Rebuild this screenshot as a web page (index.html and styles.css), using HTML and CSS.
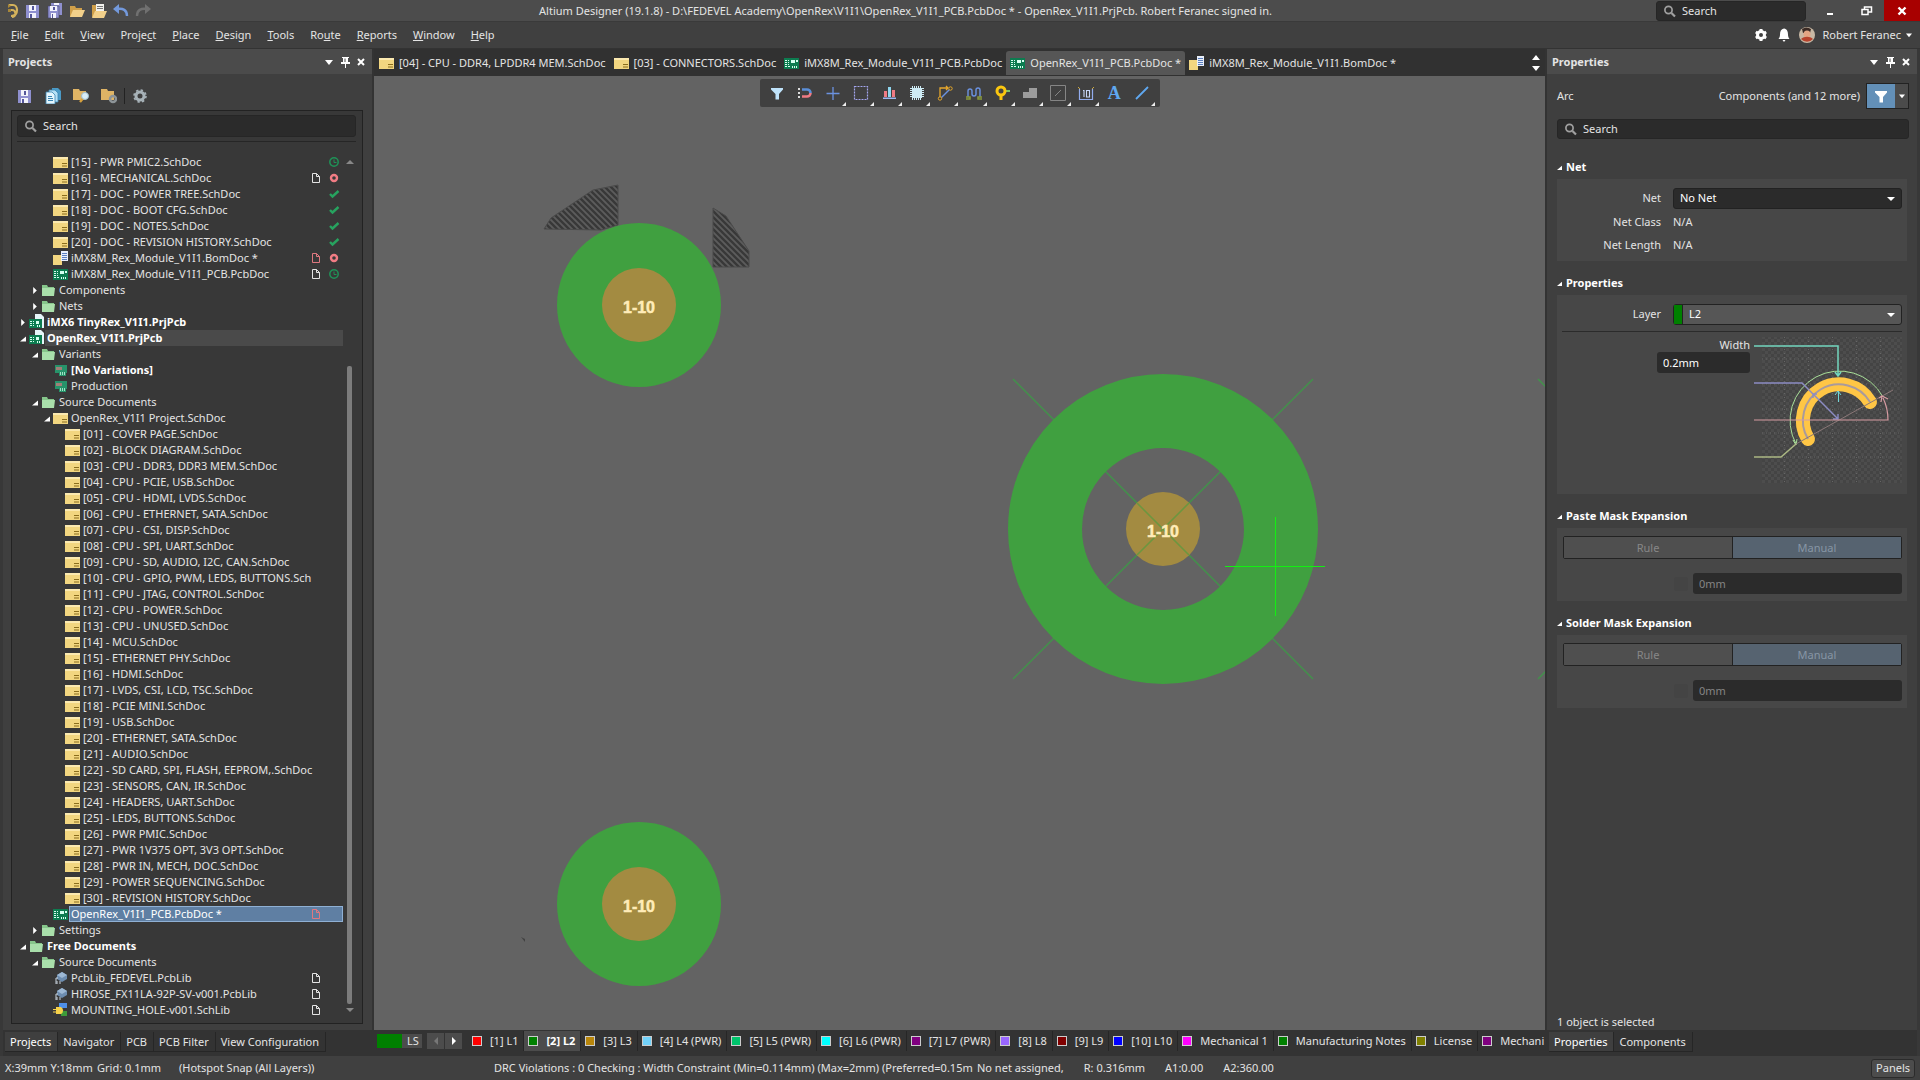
FILE: index.html
```html
<!DOCTYPE html>
<html lang="en">
<head>
    <meta charset="UTF-8">
    <meta name="viewport" content="width=device-width, initial-scale=1.0">
    <title>Altium Designer</title>
    <link rel="stylesheet" href="styles.css">
</head>
<body>

    <!-- Icons -->
    <svg class="sprite" aria-hidden="true">
        <symbol id="sch" viewBox="0 0 16 16"><path fill="#f2d680" d="M0 3h15v11H0z"/><path fill="#fbe9b0" d="M0 3h15v2H0z"/><path fill="none" stroke="#8a6d1c" d="M9 9.5h5M9 12h5"/></symbol>
        <symbol id="bom" viewBox="0 0 16 16"><path fill="#f2d680" d="M0 5h9v10H0z"/><path fill="#e8effb" d="M8 1h7v10H8z"/><path stroke="#5b7fc0" d="M9 3.5h5M9 5.5h5M9 7.5h5M9 9.5h5"/></symbol>
        <symbol id="pcb" viewBox="0 0 16 16"><path fill="#0d7c50" d="M0 3h15v11H0z"/><path fill="#d6fff0" d="M7 5h4v3H7zM12 5h2v2h-2zM8 11h1v2H8zM10 11h1v2h-1zM12 11h1v2h-1z"/><path stroke="#d6fff0" d="M1 5.5h2M4 5.5h1M1 7.5h2M4 7.5h1M1 9.5h2M4 9.5h1M1 11.5h2M4 11.5h2"/></symbol>
        <symbol id="prj" viewBox="0 0 16 16"><path fill="#e6f5f8" d="M6 0h6l3 3v11H6z"/><path fill="#0d7c50" d="M0 5h13v9H0z"/><path fill="#d6fff0" d="M7 7h3v3H7zM8 11h1v2H8zM10 11h1v2h-1z"/><path stroke="#d6fff0" d="M1 7.500h2M4 7.500h1M1 9.500h2M4 9.500h1M1 11.500h2M4 11.500h1"/></symbol>
        <symbol id="folder" viewBox="0 0 16 16"><path fill="#86c68b" d="M1 3h5l1 2h6v9H1z"/><path fill="#a9dfab" d="M1 6h13l-1 8H1z"/></symbol>
        <symbol id="variant" viewBox="0 0 16 16"><path fill="#27936a" d="M2 3h12v8h-1v3H6v-3H2z"/><path fill="#a08078" d="M3 5h6v3H3z"/><path stroke="#9fe3c6" d="M7.500 10v3M9.500 10v3M11.500 10v3"/></symbol>
        <symbol id="pcblib" viewBox="0 0 16 16"><path fill="#6d8db0" d="M4 5l5-3 5 3v4l-5 3-5-3z"/><path fill="#9db8d4" d="M4 5l5-3 5 3-5 3z"/><path fill="none" stroke="#c9d3dd" d="M5 8H3v6M7 11v3M4 11v3"/></symbol>
        <symbol id="schlib" viewBox="0 0 16 16"><path fill="#4e8fe8" d="M6 1h8v5H6z"/><path fill="#3d9a3a" d="M8 9h6v5H8z"/><path fill="#f7d24a" d="M3 5h5a4 4 0 010 7H3z"/><path stroke="#f7d24a" d="M0 7.500h4M0 10h4"/></symbol>
        <symbol id="doc" viewBox="0 0 16 16"><path fill="none" stroke="currentColor" d="M4.500 3.500h4l3 3v6h-7zM8.500 3.500v3h3"/></symbol>
        <symbol id="ok" viewBox="0 0 16 16"><path fill="none" stroke="#27a35f" stroke-width="2.400" d="M4 8l2.500 2.500 6-5.500"/></symbol>
        <symbol id="clock" viewBox="0 0 16 16"><circle cx="8" cy="8" r="4.200" fill="none" stroke="#1f9257" stroke-width="1.500"/><path fill="none" stroke="#1f9257" d="M8 5.500V8.500h2.500"/></symbol>
        <symbol id="stop" viewBox="0 0 16 16"><circle cx="8" cy="8" r="3" fill="none" stroke="#f17c84" stroke-width="2.400"/></symbol>
        <symbol id="save" viewBox="0 0 16 16"><path fill="#8f90cf" d="M1 2h13v13H1z"/><path fill="#f3f3fb" d="M4 2h7v6H4zM4 10h7v5H4z"/><path fill="#55579b" d="M7 3h2v4H7zM5 11h2v4H5z"/></symbol>
        <symbol id="saveall" viewBox="0 0 16 16"><path fill="#8f90cf" d="M4 0h11v12H4z"/><path fill="#f3f3fb" d="M7 0h5v2H7z"/><path fill="#8f90cf" stroke="#44446a" stroke-width=".6" d="M1 3h11v12H1z"/><path fill="#f3f3fb" d="M3 3h7v5H3zM4 10h5v5H4z"/><path fill="#55579b" d="M6 4h2v3H6zM5 11h1v4H5z"/></symbol>
        <symbol id="open" viewBox="0 0 16 16"><path fill="#cf9f4a" d="M1 3h5l1 2h6v9H1z"/><path fill="#f2d08a" d="M4 7h12l-3 7H1z"/></symbol>
        <symbol id="openprj" viewBox="0 0 16 16"><path fill="#cf9f4a" d="M1 2h4l1 3h7v9H1z"/><path fill="#f2f2ee" d="M5 1h8v8H5z"/><path stroke="#777" d="M6 3.500h6M6 5.500h6"/><path fill="#f2d08a" d="M4 8h12l-3 7H1z"/></symbol>
        <symbol id="undo" viewBox="0 0 16 16"><path fill="none" stroke="#7399dc" stroke-width="2.400" d="M4 6c6-1 10 1 10 7"/><path fill="#7399dc" d="M0 6l6-5v10z"/></symbol>
        <symbol id="redo" viewBox="0 0 16 16"><path fill="none" stroke="#707070" stroke-width="2.400" d="M12 6C6 5 2 7 2 13"/><path fill="#707070" d="M16 6l-6-5v10z"/></symbol>
        <symbol id="copy" viewBox="0 0 16 16"><path fill="#4b9ac6" d="M7 0h6l3 3v9H7z"/><path fill="#b5e0f5" stroke="#3a86b3" stroke-width=".8" d="M4 2h6l3 3v9H4z"/><path fill="#e5f6fd" stroke="#3a86b3" stroke-width=".8" d="M1 4h6l3 3v9H1z"/><path stroke="#3a86b3" d="M3 8.500h4M3 10.500h5M3 12.500h5"/></symbol>
        <symbol id="foldfind" viewBox="0 0 16 16"><path fill="#dfb465" d="M0 1h6l1 2h6v9H0z"/><circle cx="12" cy="8" r="3.500" fill="#d8edf7" stroke="#9dbccb"/><path stroke="#d7a13d" stroke-width="2.400" d="M9.500 11L7 14"/></symbol>
        <symbol id="foldgear" viewBox="0 0 16 16"><path fill="#dfb465" d="M0 1h6l1 2h6v9H0z"/><circle cx="12" cy="11" r="3" fill="none" stroke="#8d9498" stroke-width="2.500"/></symbol>
        <symbol id="ring" viewBox="0 0 16 16"><circle cx="8" cy="8" r="4" fill="none" stroke="#a7b2b8" stroke-width="3"/><circle cx="8" cy="8" r="6" fill="none" stroke="#a7b2b8" stroke-width="1.600" stroke-dasharray="2.400 2.300"/></symbol>
        <symbol id="gear" viewBox="0 0 16 16"><circle cx="8" cy="8" r="3.500" fill="none" stroke="#fff" stroke-width="3"/><path stroke="#fff" stroke-width="3" d="M8 2v2M8 12v2M2.800 5l1.700 1M11.500 10l1.700 1M2.800 11l1.700-1M11.500 6l1.700-1"/></symbol>
        <symbol id="bell" viewBox="0 0 16 16"><path fill="#fff" d="M8 1.500c3 .5 4 3 4 6 0 2 .5 3 1.500 4.500h-11C3.500 10.500 4 9.500 4 7.500c0-3 1-5.500 4-6zM6.500 13h3l-1.500 2z"/></symbol>
        <symbol id="find" viewBox="0 0 16 16"><circle cx="6.500" cy="7" r="3.600" fill="none" stroke="#a0a0a0" stroke-width="1.700"/><path stroke="#a0a0a0" stroke-width="2.200" d="M9.500 10l3.500 3.500"/></symbol>
        <symbol id="down" viewBox="0 0 16 16"><path fill="#fff" d="M4 6h8l-4 5z"/></symbol>
        <symbol id="pin" viewBox="0 0 16 16"><path fill="#fff" d="M5 3h7v1h-1v4h2v2H9v4H8v-4H4V8h2V4H5z"/><path fill="#4b4b4b" d="M7.500 4.500h1V8h-1z"/></symbol>
        <symbol id="close" viewBox="0 0 16 16"><path stroke="#fff" stroke-width="2" d="M5 5l6 6M11 5l-6 6"/></symbol>
        <symbol id="filter" viewBox="0 0 16 16"><path fill="currentColor" d="M2 3h12v1.500L10 9v5.500H6.500V9L2 4.500z"/></symbol>
        <symbol id="shut" viewBox="0 0 6 10"><path fill="#fff" d="M1 1l4 4-4 4z"/></symbol>
        <symbol id="opened" viewBox="0 0 6 6"><path fill="#fff" d="M6 1v5H0z"/></symbol>
    </svg>

    <div class="app">

        <!-- Title bar -->
        <header class="titlebar">
            <div class="quick">
                <svg class="ic" viewBox="0 0 16 16"><path fill="none" stroke="#d4b25c" stroke-width="2.200" d="M6 2h4a4 5 0 014 5c0 4-2 6-6 6M6 7h3a2 2 0 010 7"/><path fill="#a8873a" d="M5 1l3 2-3 2zM5 6h3v3H5z"/></svg>
                <svg class="ic"><use href="#save"/></svg>
                <svg class="ic"><use href="#saveall"/></svg>
                <svg class="ic"><use href="#open"/></svg>
                <svg class="ic"><use href="#openprj"/></svg>
                <svg class="ic"><use href="#undo"/></svg>
                <svg class="ic"><use href="#redo"/></svg>
            </div>
            <div class="title">Altium Designer (19.1.8) - D:\FEDEVEL Academy\OpenRex\V1I1\OpenRex_V1I1_PCB.PcbDoc * - OpenRex_V1I1.PrjPcb. Robert Feranec signed in.</div>
            <label class="search title-search"><svg class="ic"><use href="#find"/></svg><input type="text" placeholder="Search" aria-label="Search"></label>
            <div class="winbtns">
                <button type="button" aria-label="Minimize"><svg class="ic" viewBox="0 0 16 16"><path fill="#fff" d="M5 10h6v2H5z"/></svg></button>
                <button type="button" aria-label="Restore"><svg class="ic" viewBox="0 0 16 16"><path fill="none" stroke="#fff" stroke-width="1.500" d="M6.500 6V4h7v5h-3M4 6.500h6v5H4z"/></svg></button>
                <button type="button" class="quit" aria-label="Close"><svg class="ic" viewBox="0 0 16 16"><path stroke="#fff" stroke-width="2.400" d="M4.500 4.500l7 7M11.500 4.500l-7 7"/></svg></button>
            </div>
        </header>

        <!-- Main menu -->
        <nav class="menubar">
            <button type="button"><u>F</u>ile</button>
            <button type="button"><u>E</u>dit</button>
            <button type="button"><u>V</u>iew</button>
            <button type="button">Proje<u>c</u>t</button>
            <button type="button"><u>P</u>lace</button>
            <button type="button"><u>D</u>esign</button>
            <button type="button"><u>T</u>ools</button>
            <button type="button">Ro<u>u</u>te</button>
            <button type="button"><u>R</u>eports</button>
            <button type="button"><u>W</u>indow</button>
            <button type="button"><u>H</u>elp</button>
            <div class="user">
                <svg class="ic"><use href="#gear"/></svg>
                <svg class="ic"><use href="#bell"/></svg>
                <svg class="ic" viewBox="0 0 16 16"><circle cx="8" cy="8" r="8" fill="#c8b8a4"/><path fill="#3b2b25" d="M3 2a8 8 0 019 0l-1 4H4z"/><circle cx="8" cy="7" r="3.500" fill="#e3a583"/><path fill="#b8432c" d="M2 12c3-3 9-3 12 0a8 8 0 01-12 0z"/></svg>
                <button type="button">Robert Feranec<svg class="ic small"><use href="#down"/></svg></button>
            </div>
        </nav>

        <main class="work">

            <!-- Projects panel -->
            <aside class="panel left">
                <div class="panel-head"><h2>Projects</h2><svg class="ic"><use href="#down"/></svg><svg class="ic"><use href="#pin"/></svg><svg class="ic"><use href="#close"/></svg></div>
                <div class="panel-tools">
                    <svg class="ic"><use href="#save"/></svg>
                    <svg class="ic"><use href="#copy"/></svg>
                    <svg class="ic"><use href="#foldfind"/></svg>
                    <svg class="ic"><use href="#foldgear"/></svg>
                    <i class="bar"></i>
                    <svg class="ic"><use href="#ring"/></svg>
                </div>
                <div class="tree-box">
                    <label class="search"><svg class="ic"><use href="#find"/></svg><input type="text" placeholder="Search" aria-label="Search projects"></label>
                    <div class="tree-wrap">
                        <ul class="tree">
                            <li class="l2"><i></i><svg><use href="#sch"/></svg><p><span>[15] - PWR PMIC2.SchDoc</span><svg><use href="#clock"/></svg></p></li>
                            <li class="l2"><i></i><svg><use href="#sch"/></svg><p><span>[16] - MECHANICAL.SchDoc</span><svg><use href="#doc"/></svg><svg><use href="#stop"/></svg></p></li>
                            <li class="l2"><i></i><svg><use href="#sch"/></svg><p><span>[17] - DOC - POWER TREE.SchDoc</span><svg><use href="#ok"/></svg></p></li>
                            <li class="l2"><i></i><svg><use href="#sch"/></svg><p><span>[18] - DOC - BOOT CFG.SchDoc</span><svg><use href="#ok"/></svg></p></li>
                            <li class="l2"><i></i><svg><use href="#sch"/></svg><p><span>[19] - DOC - NOTES.SchDoc</span><svg><use href="#ok"/></svg></p></li>
                            <li class="l2"><i></i><svg><use href="#sch"/></svg><p><span>[20] - DOC - REVISION HISTORY.SchDoc</span><svg><use href="#ok"/></svg></p></li>
                            <li class="l2"><i></i><svg><use href="#bom"/></svg><p><span>iMX8M_Rex_Module_V1I1.BomDoc *</span><svg class="red"><use href="#doc"/></svg><svg><use href="#stop"/></svg></p></li>
                            <li class="l2"><i></i><svg><use href="#pcb"/></svg><p><span>iMX8M_Rex_Module_V1I1_PCB.PcbDoc</span><svg><use href="#doc"/></svg><svg><use href="#clock"/></svg></p></li>
                            <li class="l1"><i><svg><use href="#shut"/></svg></i><svg><use href="#folder"/></svg><p><span>Components</span></p></li>
                            <li class="l1"><i><svg><use href="#shut"/></svg></i><svg><use href="#folder"/></svg><p><span>Nets</span></p></li>
                            <li class="bold"><i><svg><use href="#shut"/></svg></i><svg><use href="#prj"/></svg><p><span>iMX6 TinyRex_V1I1.PrjPcb</span></p></li>
                            <li class="bold current"><i><svg><use href="#opened"/></svg></i><svg><use href="#prj"/></svg><p><span>OpenRex_V1I1.PrjPcb</span></p></li>
                            <li class="l1"><i><svg><use href="#opened"/></svg></i><svg><use href="#folder"/></svg><p><span>Variants</span></p></li>
                            <li class="l2 bold"><i></i><svg><use href="#variant"/></svg><p><span>[No Variations]</span></p></li>
                            <li class="l2"><i></i><svg><use href="#variant"/></svg><p><span>Production</span></p></li>
                            <li class="l1"><i><svg><use href="#opened"/></svg></i><svg><use href="#folder"/></svg><p><span>Source Documents</span></p></li>
                            <li class="l2"><i><svg><use href="#opened"/></svg></i><svg><use href="#sch"/></svg><p><span>OpenRex_V1I1 Project.SchDoc</span></p></li>
                            <li class="l3"><i></i><svg><use href="#sch"/></svg><p><span>[01] - COVER PAGE.SchDoc</span></p></li>
                            <li class="l3"><i></i><svg><use href="#sch"/></svg><p><span>[02] - BLOCK DIAGRAM.SchDoc</span></p></li>
                            <li class="l3"><i></i><svg><use href="#sch"/></svg><p><span>[03] - CPU - DDR3, DDR3 MEM.SchDoc</span></p></li>
                            <li class="l3"><i></i><svg><use href="#sch"/></svg><p><span>[04] - CPU - PCIE, USB.SchDoc</span></p></li>
                            <li class="l3"><i></i><svg><use href="#sch"/></svg><p><span>[05] - CPU - HDMI, LVDS.SchDoc</span></p></li>
                            <li class="l3"><i></i><svg><use href="#sch"/></svg><p><span>[06] - CPU - ETHERNET, SATA.SchDoc</span></p></li>
                            <li class="l3"><i></i><svg><use href="#sch"/></svg><p><span>[07] - CPU - CSI, DISP.SchDoc</span></p></li>
                            <li class="l3"><i></i><svg><use href="#sch"/></svg><p><span>[08] - CPU - SPI, UART.SchDoc</span></p></li>
                            <li class="l3"><i></i><svg><use href="#sch"/></svg><p><span>[09] - CPU - SD, AUDIO, I2C, CAN.SchDoc</span></p></li>
                            <li class="l3"><i></i><svg><use href="#sch"/></svg><p><span>[10] - CPU - GPIO, PWM, LEDS, BUTTONS.Sch</span></p></li>
                            <li class="l3"><i></i><svg><use href="#sch"/></svg><p><span>[11] - CPU - JTAG, CONTROL.SchDoc</span></p></li>
                            <li class="l3"><i></i><svg><use href="#sch"/></svg><p><span>[12] - CPU - POWER.SchDoc</span></p></li>
                            <li class="l3"><i></i><svg><use href="#sch"/></svg><p><span>[13] - CPU - UNUSED.SchDoc</span></p></li>
                            <li class="l3"><i></i><svg><use href="#sch"/></svg><p><span>[14] - MCU.SchDoc</span></p></li>
                            <li class="l3"><i></i><svg><use href="#sch"/></svg><p><span>[15] - ETHERNET PHY.SchDoc</span></p></li>
                            <li class="l3"><i></i><svg><use href="#sch"/></svg><p><span>[16] - HDMI.SchDoc</span></p></li>
                            <li class="l3"><i></i><svg><use href="#sch"/></svg><p><span>[17] - LVDS, CSI, LCD, TSC.SchDoc</span></p></li>
                            <li class="l3"><i></i><svg><use href="#sch"/></svg><p><span>[18] - PCIE MINI.SchDoc</span></p></li>
                            <li class="l3"><i></i><svg><use href="#sch"/></svg><p><span>[19] - USB.SchDoc</span></p></li>
                            <li class="l3"><i></i><svg><use href="#sch"/></svg><p><span>[20] - ETHERNET, SATA.SchDoc</span></p></li>
                            <li class="l3"><i></i><svg><use href="#sch"/></svg><p><span>[21] - AUDIO.SchDoc</span></p></li>
                            <li class="l3"><i></i><svg><use href="#sch"/></svg><p><span>[22] - SD CARD, SPI, FLASH, EEPROM,.SchDoc</span></p></li>
                            <li class="l3"><i></i><svg><use href="#sch"/></svg><p><span>[23] - SENSORS, CAN, IR.SchDoc</span></p></li>
                            <li class="l3"><i></i><svg><use href="#sch"/></svg><p><span>[24] - HEADERS, UART.SchDoc</span></p></li>
                            <li class="l3"><i></i><svg><use href="#sch"/></svg><p><span>[25] - LEDS, BUTTONS.SchDoc</span></p></li>
                            <li class="l3"><i></i><svg><use href="#sch"/></svg><p><span>[26] - PWR PMIC.SchDoc</span></p></li>
                            <li class="l3"><i></i><svg><use href="#sch"/></svg><p><span>[27] - PWR 1V375 OPT, 3V3 OPT.SchDoc</span></p></li>
                            <li class="l3"><i></i><svg><use href="#sch"/></svg><p><span>[28] - PWR IN, MECH, DOC.SchDoc</span></p></li>
                            <li class="l3"><i></i><svg><use href="#sch"/></svg><p><span>[29] - POWER SEQUENCING.SchDoc</span></p></li>
                            <li class="l3"><i></i><svg><use href="#sch"/></svg><p><span>[30] - REVISION HISTORY.SchDoc</span></p></li>
                            <li class="l2 selected"><i></i><svg><use href="#pcb"/></svg><p><span>OpenRex_V1I1_PCB.PcbDoc *</span><svg class="red"><use href="#doc"/></svg><b></b></p></li>
                            <li class="l1"><i><svg><use href="#shut"/></svg></i><svg><use href="#folder"/></svg><p><span>Settings</span></p></li>
                            <li class="bold"><i><svg><use href="#opened"/></svg></i><svg><use href="#folder"/></svg><p><span>Free Documents</span></p></li>
                            <li class="l1"><i><svg><use href="#opened"/></svg></i><svg><use href="#folder"/></svg><p><span>Source Documents</span></p></li>
                            <li class="l2"><i></i><svg><use href="#pcblib"/></svg><p><span>PcbLib_FEDEVEL.PcbLib</span><svg><use href="#doc"/></svg><b></b></p></li>
                            <li class="l2"><i></i><svg><use href="#pcblib"/></svg><p><span>HIROSE_FX11LA-92P-SV-v001.PcbLib</span><svg><use href="#doc"/></svg><b></b></p></li>
                            <li class="l2"><i></i><svg><use href="#schlib"/></svg><p><span>MOUNTING_HOLE-v001.SchLib</span><svg><use href="#doc"/></svg><b></b></p></li>
                        </ul>
                        <div class="scroll"><i class="up"></i><i class="track"><i class="thumb"></i></i><i class="dn"></i></div>
                    </div>
                </div>
                <div class="panel-tabs">
                    <button type="button" class="on">Projects</button>
                    <button type="button">Navigator</button>
                    <button type="button">PCB</button>
                    <button type="button">PCB Filter</button>
                    <button type="button">View Configuration</button>
                </div>
            </aside>

            <!-- Editor -->
            <section class="editor">
                <div class="doc-tabs">
                    <button type="button"><svg class="ic"><use href="#sch"/></svg>[04] - CPU - DDR4, LPDDR4 MEM.SchDoc</button>
                    <button type="button"><svg class="ic"><use href="#sch"/></svg>[03] - CONNECTORS.SchDoc</button>
                    <button type="button"><svg class="ic"><use href="#pcb"/></svg>iMX8M_Rex_Module_V1I1_PCB.PcbDoc</button>
                    <button type="button" class="on"><svg class="ic"><use href="#pcb"/></svg>OpenRex_V1I1_PCB.PcbDoc *</button>
                    <button type="button"><svg class="ic"><use href="#bom"/></svg>iMX8M_Rex_Module_V1I1.BomDoc *</button>
                    <svg class="updown" viewBox="0 0 8 20"><path fill="#fff" d="M4 2l4 5H0zM4 18l4-5H0z"/></svg>
                </div>
                <div class="canvas">
                    <svg class="board">
                        <defs>
                            <pattern id="hatch" width="6" height="6" patternUnits="userSpaceOnUse"><path fill="#5c5c5c" d="M0 0h6v6H0z"/><path stroke="#383838" stroke-width="2.400" d="M-1-1l8 8M-1 5l2 2M5-1l2 2"/></pattern>
                        </defs>
                        <path fill="url(#hatch)" stroke="#4a4a4a" d="M170 153l7-11 42-28 25-5v40l-17 5zM339 132l13 8 23 35v16h-36z"/>
                        <path fill="#424242" d="M147 861l4 2v3z"/>
                        <path fill="none" stroke="#42914b" stroke-width="1.500" d="M639 303l300 300M939 303l-300 300M1164 303l12 12M1164 603l12-12"/>
                        <circle cx="265" cy="229" r="82" fill="#40a040"/>
                        <circle cx="265" cy="828" r="82" fill="#40a040"/>
                        <circle cx="789" cy="453" r="118" fill="none" stroke="#40a040" stroke-width="74"/>
                        <g fill="#a38b41"><circle cx="265" cy="229" r="37"/><circle cx="265" cy="828" r="37"/><circle cx="789" cy="453" r="37"/></g>
                        <path stroke="#6b973f" stroke-width="1.500" d="M763 427l52 52M815 427l-52 52"/>
                        <g class="pad"><text x="265" y="237">1-10</text><text x="265" y="836">1-10</text><text x="789" y="461">1-10</text></g>
                        <path stroke="#12f012" d="M851 490.500h100M901.500 441v99"/>
                    </svg>
                    <div class="active-bar">
                        <button type="button" class="pale" aria-label="Filter"><svg class="ic"><use href="#filter"/></svg></button>
                        <button type="button" aria-label="Snap"><svg class="ic" viewBox="0 0 16 16"><path fill="none" stroke="#5b8fd8" stroke-width="2.600" d="M5 4.500h5a3.500 3.500 0 013.500 3.500"/><path fill="none" stroke="#ef7b84" stroke-width="2.600" d="M13.500 8a3.500 3.500 0 01-3.500 3.500H5"/><path fill="#ddd" d="M1 3h2v2H1zM1 7h2v2H1zM1 11h2v2H1z"/></svg></button>
                        <button type="button" class="more" aria-label="Origin"><svg class="ic" viewBox="0 0 16 16"><path stroke="#6b92e0" stroke-width="1.300" d="M8 2v13M1.500 8.500h13"/></svg></button>
                        <button type="button" class="more" aria-label="Select"><svg class="ic" viewBox="0 0 16 16"><path fill="none" stroke="#a3a5ee" stroke-width="1.200" stroke-dasharray="2 1" d="M1.500 1.500h13v13h-13z"/></svg></button>
                        <button type="button" class="more" aria-label="Align"><svg class="ic" viewBox="0 0 16 16"><path fill="#8fd6f0" d="M7 2h3v10H7z"/><path fill="#ef7b84" d="M3 6h3v6H3zM11 5h3v7h-3z"/><path fill="#9db8f2" d="M2 12.500h13V14H2z"/></svg></button>
                        <button type="button" class="more" aria-label="Component"><svg class="ic" viewBox="0 0 16 16"><path fill="#cdebf4" d="M3 3h10v10H3z"/><path fill="none" stroke="#cdebf4" stroke-dasharray="1 1" stroke-width="2" d="M3 2h10M3 14h10M2 3v10M14 3v10"/></svg></button>
                        <button type="button" class="more" aria-label="Route"><svg class="ic" viewBox="0 0 16 16"><path fill="none" stroke="#e5a72c" stroke-width="1.300" d="M3 12V3h8M9 1l2 2-2 2"/><path stroke="#6b92e0" stroke-width="1.400" d="M4 13l9-9"/><circle cx="3" cy="13.500" r="1.700" fill="#3b3b3b" stroke="#e5a72c"/><circle cx="13.500" cy="3.500" r="1.700" fill="#3b3b3b" stroke="#e5a72c"/></svg></button>
                        <button type="button" class="more" aria-label="Tune"><svg class="ic" viewBox="0 0 16 16"><path fill="none" stroke="#6b92e0" stroke-width="1.400" d="M2 12V6a2 2 0 014 0v3a2 2 0 004 0V5a2 2 0 014 0v7"/><path fill="none" stroke="#8a9a3a" stroke-width="1.500" d="M0 12h4v2H0M16 12h-4v2h4"/></svg></button>
                        <button type="button" class="more" aria-label="Via"><svg class="ic" viewBox="0 0 16 16"><path fill="#7fc466" d="M9 5h7v2H9z"/><circle cx="7" cy="6" r="4" fill="#444" stroke="#fbc70f" stroke-width="3"/><path fill="#fbc70f" d="M5.500 9h3v6h-3z"/></svg></button>
                        <button type="button" class="more" aria-label="Polygon"><svg class="ic" viewBox="0 0 16 16"><path fill="#9c9c9c" d="M7 3h8v10H1V7h6z"/></svg></button>
                        <button type="button" class="more" aria-label="Room"><svg class="ic" viewBox="0 0 16 16"><path fill="none" stroke="#858585" d="M.5 .5h15v15H.5zM5 11l6-6"/></svg></button>
                        <button type="button" class="more" aria-label="Dimension"><svg class="ic" viewBox="0 0 16 16"><path fill="none" stroke="#92acee" stroke-width="1.200" d="M1.500 4v10.500h13V4"/><path stroke="#c9a640" d="M0 2l2 2M16 2l-2 2"/><path fill="none" stroke="#c8d7f7" stroke-width="1.100" d="M5 5.500h1V12M8.500 5.500h3V12h-3z"/></svg></button>
                        <button type="button" class="letter">A</button>
                        <button type="button" class="more" aria-label="Line"><svg class="ic" viewBox="0 0 16 16"><path stroke="#5fa8f0" stroke-width="1.800" d="M2 14L14 2"/></svg></button>
                    </div>
                </div>
                <div class="layers">
                    <button type="button" class="ls"><i></i>LS</button>
                    <div class="arrows">
                        <button type="button" aria-label="Previous layer"><svg viewBox="0 0 8 8"><path fill="#777" d="M6 0v8L2 4z"/></svg></button>
                        <button type="button" aria-label="Next layer"><svg viewBox="0 0 8 8"><path fill="#fff" d="M2 0v8l4-4z"/></svg></button>
                    </div>
                    <button type="button" class="layer"><i style="background:#f00"></i>[1] L1</button>
                    <button type="button" class="layer on"><i style="background:#008000"></i>[2] L2</button>
                    <button type="button" class="layer"><i style="background:#b8860b"></i>[3] L3</button>
                    <button type="button" class="layer"><i style="background:#72d2fa"></i>[4] L4 (PWR)</button>
                    <button type="button" class="layer"><i style="background:#00c46c"></i>[5] L5 (PWR)</button>
                    <button type="button" class="layer"><i style="background:#0ff"></i>[6] L6 (PWR)</button>
                    <button type="button" class="layer"><i style="background:#800080"></i>[7] L7 (PWR)</button>
                    <button type="button" class="layer"><i style="background:#9966ff"></i>[8] L8</button>
                    <button type="button" class="layer"><i style="background:#800000"></i>[9] L9</button>
                    <button type="button" class="layer"><i style="background:#00f"></i>[10] L10</button>
                    <button type="button" class="layer"><i style="background:#f0f"></i>Mechanical 1</button>
                    <button type="button" class="layer"><i style="background:#008000"></i>Manufacturing Notes</button>
                    <button type="button" class="layer"><i style="background:#808000"></i>License</button>
                    <button type="button" class="layer"><i style="background:#800080"></i>Mechani</button>
                </div>
            </section>

            <!-- Properties panel -->
            <aside class="panel right">
                <div class="panel-head"><h2>Properties</h2><svg class="ic"><use href="#down"/></svg><svg class="ic"><use href="#pin"/></svg><svg class="ic"><use href="#close"/></svg></div>
                <div class="props">
                    <div class="object">
                        <span class="kind">Arc</span>
                        <span>Components (and 12 more)</span>
                        <div class="filter-btn">
                            <button type="button" class="blue" aria-label="Selection filter"><svg class="ic"><use href="#filter"/></svg></button>
                            <button type="button" aria-label="Filter list"><svg class="ic small"><use href="#down"/></svg></button>
                        </div>
                    </div>
                    <label class="search"><svg class="ic"><use href="#find"/></svg><input type="text" placeholder="Search" aria-label="Search properties"></label>

                    <h3><svg><use href="#opened"/></svg>Net</h3>
                    <div class="group">
                        <div class="field">
                            <label for="net">Net</label>
                            <div class="select"><select id="net"><option>No Net</option></select></div>
                        </div>
                        <div class="field text"><span>Net Class</span><b>N/A</b></div>
                        <div class="field text"><span>Net Length</span><b>N/A</b></div>
                    </div>

                    <h3><svg><use href="#opened"/></svg>Properties</h3>
                    <div class="group">
                        <div class="field">
                            <label for="layer">Layer</label>
                            <div class="select light"><i></i><select id="layer"><option>L2</option></select></div>
                        </div>
                        <div class="arc">
                            <div class="arc-field">
                                <label for="width">Width</label>
                                <input type="text" id="width" value="0.2mm">
                            </div>
                            <svg class="arc-pic" viewBox="0 0 149 148">
                                <defs>
                                    <pattern id="check" width="6" height="6" patternUnits="userSpaceOnUse"><path fill="#4d4d4d" d="M0 0h6v6H0z"/><path fill="#444" d="M0 0h3v3H0zM3 3h3v3H3z"/></pattern>
                                </defs>
                                <path fill="url(#check)" d="M9 1h140v146H9z"/>
                                <path stroke="#666" stroke-dasharray="1 3" d="M31.500 1v146M55.500 1v146M79.500 1v146M103.500 1v146M127.500 1v146M9 23h140M9 48h140M9 73h140M9 97h140M9 121h140"/>
                                <path fill="none" stroke="#ffc645" stroke-width="14" stroke-linecap="round" d="M55 103A36 36 0 1 1 117 66"/>
                                <path fill="none" stroke="#a99a9c" stroke-width="2" d="M55 103A36 36 0 1 1 117 66"/>
                                <path fill="none" stroke="#a8df98" d="M43 108A48 48 0 1 1 130 61M40 104l3 5 1-6"/>
                                <path fill="none" stroke="#aab783" stroke-width="1.500" d="M1 121h27l15-13"/>
                                <path stroke="#8a7777" d="M43 108l97-54"/>
                                <path fill="none" stroke="#73d6bf" stroke-width="1.500" d="M1 10h84v30M82 36l3 4 3-4"/>
                                <path fill="none" stroke="#73d6d8" d="M85.500 66V55M82 59l3-4 3 4"/>
                                <path fill="none" stroke="#8c8cc4" stroke-width="1.400" d="M1 47h48l36 36M60 62v-4h4M85 78v5h-5"/>
                                <path fill="none" stroke="#d69ba2" stroke-width="1.200" d="M1 84h134c0-9-2-16-5-22M126 62l3-2 6 3M129 60l-1 6"/>
                            </svg>
                        </div>
                    </div>

                    <h3><svg><use href="#opened"/></svg>Paste Mask Expansion</h3>
                    <div class="group">
                        <div class="switch"><button type="button" disabled>Rule</button><button type="button" class="on" disabled>Manual</button></div>
                        <div class="mask"><input type="checkbox" aria-label="Paste mask tented" disabled><input type="text" value="0mm" aria-label="Paste mask expansion" disabled></div>
                    </div>

                    <h3><svg><use href="#opened"/></svg>Solder Mask Expansion</h3>
                    <div class="group">
                        <div class="switch"><button type="button" disabled>Rule</button><button type="button" class="on" disabled>Manual</button></div>
                        <div class="mask"><input type="checkbox" aria-label="Solder mask tented" disabled><input type="text" value="0mm" aria-label="Solder mask expansion" disabled></div>
                    </div>

                    <p class="count">1 object is selected</p>
                </div>
                <div class="panel-tabs">
                    <button type="button" class="on">Properties</button>
                    <button type="button">Components</button>
                </div>
            </aside>
        </main>

        <!-- Status bar -->
        <footer class="status">
            <span class="pos">X:39mm Y:18mm</span>
            <span class="grid">Grid: 0.1mm</span>
            <span class="snap">(Hotspot Snap (All Layers))</span>
            <span class="drc">DRC Violations : 0 Checking : Width Constraint (Min=0.114mm) (Max=2mm) (Preferred=0.15m</span>
            <span class="info">No net assigned,</span>
            <span class="info">R: 0.316mm</span>
            <span class="info">A1:0.00</span>
            <span class="info">A2:360.00</span>
            <button type="button">Panels</button>
        </footer>
    </div>

</body>
</html>
```
FILE: styles.css
```css
* {
    margin: 0;
    padding: 0;
    box-sizing: border-box;
}

body {
    font-family: "Noto Sans", "Open Sans", sans-serif;
    font-size: 11px;
    line-height: 16px;
    color: #e4e4e4;
    background-color: #333;
}

button, input, select {
    font: inherit;
    color: inherit;
    background: none;
    border: none;
}

input::placeholder {
    color: #e4e4e4;
    opacity: 1;
}

.sprite {
    display: none;
}

.ic {
    width: 16px;
    height: 16px;
    flex: none;
}

.ic.small {
    width: 12px;
    height: 12px;
}

.app {
    display: flex;
    flex-direction: column;
    height: 100vh;
    overflow: hidden;
}

/* title bar */
.titlebar {
    display: flex;
    align-items: center;
    height: 22px;
    background-color: #4c4c4c;
    border-bottom: 1px solid #3a3a3a;
}

.quick {
    display: flex;
    gap: 6px;
    width: 155px;
    padding-left: 3px;
}

.title {
    flex: 1;
    text-align: center;
    white-space: nowrap;
}

.search {
    display: flex;
    align-items: center;
    height: 20px;
    padding-left: 5px;
    gap: 4px;
    background-color: #2b2b2b;
    border: 1px solid #262626;
    border-radius: 3px;
}

.search input {
    flex: 1;
    min-width: 0;
}

.title-search {
    width: 150px;
}

.winbtns {
    display: flex;
    height: 21px;
    margin-left: 6px;
}

.winbtns button {
    display: flex;
    align-items: center;
    justify-content: center;
    width: 36px;
}

.winbtns .quit {
    background-color: #a80000;
}

/* menu */
.menubar {
    display: flex;
    align-items: center;
    gap: 16px;
    height: 26px;
    padding: 0 5px 0 11px;
    background-color: #404040;
}

.user {
    display: flex;
    align-items: center;
    gap: 7px;
    margin-left: auto;
}

.user button {
    display: flex;
    align-items: center;
    gap: 2px;
}

/* work area */
.work {
    display: flex;
    flex: 1;
    min-height: 0;
    padding-top: 1px;
}

.panel {
    display: flex;
    flex-direction: column;
    flex: none;
    background-color: #3f3f3f;
}

.left {
    width: 372px;
    border-left: 3px solid #383838;
}

.right {
    width: 373px;
    border-right: 3px solid #383838;
}

.panel-head {
    display: flex;
    align-items: center;
    height: 25px;
    padding: 0 3px 0 5px;
    background-color: #4b4b4b;
}

.panel-head h2 {
    flex: 1;
    font-size: 11px;
    font-weight: bold;
}

.panel-tools {
    display: flex;
    align-items: center;
    gap: 12px;
    height: 36px;
    padding: 8px 14px 0;
}

.panel-tools .bar {
    width: 1px;
    height: 16px;
    margin: 0 -5px;
    background-color: #222;
}

.tree-box {
    display: flex;
    flex-direction: column;
    flex: 1;
    min-height: 0;
    margin: 0 9px 6px 8px;
    padding: 4px 6px 0 5px;
    background-color: #383838;
    border: 1px solid #222;
}

.tree-box .search {
    height: 22px;
}

.tree-wrap {
    display: flex;
    margin-top: 4px;
    padding-top: 12px;
    border-top: 1px solid #262626;
}

.tree {
    flex: 1;
    min-width: 0;
    list-style: none;
}

.tree li {
    display: flex;
    height: 16px;
}

.tree .l1 {
    padding-left: 12px;
}

.tree .l2 {
    padding-left: 24px;
}

.tree .l3 {
    padding-left: 36px;
}

.tree svg {
    width: 16px;
    height: 16px;
    flex: none;
}

.tree li > i {
    display: flex;
    align-items: center;
    justify-content: center;
    width: 12px;
}

.tree i svg {
    width: 6px;
    height: 9px;
}

.tree p {
    display: flex;
    flex: 1;
    min-width: 0;
    gap: 2px;
    padding: 0 1px 0 2px;
}

.tree p b {
    width: 16px;
}

.tree span {
    flex: 1;
    overflow: hidden;
    white-space: nowrap;
}

.bold {
    font-weight: bold;
    color: #fff;
}

.current p {
    background-color: #4a4a4a;
}

.selected p {
    color: #fff;
    background-color: #5f7fa3;
    outline: 1px solid #8fb0d4;
    outline-offset: -1px;
}

.red {
    color: #e07880;
}

.scroll {
    display: flex;
    flex-direction: column;
    align-items: center;
    width: 13px;
    padding: 6px 0;
}

.up, .dn {
    border: 4px solid transparent;
    border-top-width: 0;
    border-bottom-color: #888;
}

.dn {
    border-top: 4px solid #888;
    border-bottom-width: 0;
}

.track {
    display: flex;
    flex: 1;
    padding: 0 0 4px;
}

.thumb {
    width: 5px;
    height: 76%;
    margin-top: auto;
    align-self: flex-end;
    border-radius: 2px;
    background-color: #7c7c7c;
}

.panel-tabs {
    display: flex;
    height: 26px;
    padding: 2px 2px 0;
    background-color: #333;
}

.panel-tabs button {
    height: 20px;
    padding: 0 6px 0 5px;
    border-right: 1px solid #262626;
    border-bottom: 1px solid #262626;
}

.panel-tabs .on {
    background-color: #3f3f3f;
    color: #fff;
}

/* editor */
.editor {
    display: flex;
    flex-direction: column;
    flex: 1;
    min-width: 0;
    margin: 0 2px;
}

.doc-tabs {
    display: flex;
    align-items: center;
    height: 27px;
    padding: 2px 5px 1px 1px;
    background-color: #313131;
}

.doc-tabs button {
    display: flex;
    align-items: center;
    gap: 4px;
    height: 24px;
    padding: 0 4px;
    white-space: nowrap;
}

.doc-tabs .on {
    background-color: #565656;
    border-radius: 3px 3px 0 0;
}

.updown {
    width: 8px;
    height: 20px;
    margin-left: auto;
}

.canvas {
    position: relative;
    flex: 1;
    min-height: 0;
    background-color: #636363;
}

.board {
    display: block;
    width: 100%;
    height: 100%;
}

.pad text {
    font: bold 16px "Liberation Sans", Arial, sans-serif;
    fill: #ffecb8;
    stroke: #ffecb8;
    stroke-width: 0.5;
    text-anchor: middle;
}

.active-bar {
    position: absolute;
    top: 3px;
    left: 50%;
    display: flex;
    width: 400px;
    height: 28px;
    padding: 0 3px;
    transform: translateX(-50%);
    background-color: #404040;
    border-radius: 2px;
}

.active-bar button {
    position: relative;
    display: flex;
    flex: 1;
    align-items: center;
    justify-content: center;
}

.active-bar .more::after {
    content: "";
    position: absolute;
    right: 1px;
    bottom: 1px;
    border: 2px solid #eee;
    border-top-color: transparent;
    border-left-color: transparent;
}

.active-bar .pale {
    color: #bfe3fb;
}

.active-bar .letter {
    font: bold 18px "Liberation Serif", serif;
    color: #5fa8f0;
}

.layers {
    display: flex;
    height: 26px;
    padding: 1px 0 5px 3px;
    overflow: hidden;
    background-color: #333;
}

.layers button {
    flex: none;
    white-space: nowrap;
}

.layers .ls {
    display: flex;
    width: 45px;
    height: 14px;
    margin: 3px 5px 0 0;
    gap: 5px;
    line-height: 14px;
    background-color: #4c4c4c;
}

.ls i {
    width: 25px;
    height: 14px;
    background-color: #008000;
}

.arrows {
    display: flex;
    flex: none;
    height: 16px;
    margin: 2px 6px 0 0;
    gap: 1px;
}

.arrows button {
    width: 17px;
    background-color: #4c4c4c;
}

.arrows svg {
    width: 8px;
    height: 8px;
}

.layer {
    display: flex;
    align-items: center;
    gap: 8px;
    padding: 0 5px 0 4px;
    border-right: 1px solid #262626;
}

.layer i {
    width: 10px;
    height: 10px;
    border: 1px solid #ccc;
}

.layer.on {
    font-weight: bold;
    color: #fff;
    background-color: #4c4c4c;
}

/* properties */
.props {
    display: flex;
    flex-direction: column;
    flex: 1;
    padding: 9px 8px 0 10px;
}

.object {
    display: flex;
    align-items: center;
    height: 26px;
    gap: 6px;
}

.kind {
    flex: 1;
}

.filter-btn {
    display: flex;
    height: 26px;
    border: 1px solid #222;
}

.filter-btn button {
    display: flex;
    align-items: center;
    justify-content: center;
    width: 13px;
    background-color: #4b4b4b;
}

.filter-btn .blue {
    width: 28px;
    color: #fff;
    background-color: #6390b8;
}

.props .search {
    margin: 10px 0 20px;
}

h3 {
    display: flex;
    align-items: center;
    gap: 4px;
    height: 16px;
    font-size: 11px;
    font-weight: bold;
    color: #fff;
}

h3 svg {
    width: 5px;
    height: 5px;
}

.group {
    margin: 4px 2px 14px 0;
    padding: 7px 5px 5px;
    background-color: #474747;
}

.field {
    display: flex;
    align-items: center;
    gap: 12px;
    height: 24px;
}

.field > :first-child {
    width: 99px;
    text-align: right;
}

.field.text {
    height: 23px;
}

.field b {
    font-weight: normal;
}

.select {
    position: relative;
    display: flex;
    flex: 1;
    height: 21px;
    background-color: #2b2b2b;
    border: 1px solid #222;
    border-radius: 3px;
}

.select::after {
    content: "";
    position: absolute;
    right: 6px;
    top: 8px;
    border: 4px solid transparent;
    border-top-color: #fff;
    border-bottom-width: 0;
}

.select select {
    flex: 1;
    padding-left: 6px;
    color: #fff;
    appearance: none;
}

.select.light {
    background-color: #565656;
}

.select i {
    width: 9px;
    background-color: #008000;
    border-right: 1px solid #222;
}

.arc {
    display: flex;
    justify-content: flex-end;
    gap: 3px;
    margin-top: 5px;
    padding: 4px 0 5px;
    border-top: 1px solid #2b2b2b;
}

.arc-field {
    display: flex;
    flex-direction: column;
    align-items: flex-end;
    width: 93px;
    padding-top: 2px;
    line-height: 14px;
}

.arc-field input, .mask input[type="text"] {
    width: 100%;
    height: 21px;
    padding-left: 6px;
    background-color: #2b2b2b;
    border-radius: 3px;
    color: #fff;
}

.arc-pic {
    width: 149px;
    height: 148px;
}

.switch {
    display: flex;
    margin: 1px 0 0 1px;
    height: 23px;
    border: 1px solid #222;
    border-radius: 2px;
}

.switch button {
    flex: 1;
    color: #878787;
    background-color: #4f4f4f;
}

.switch .on {
    color: #8796a5;
    background-color: #566370;
    border-left: 1px solid #222;
}

.mask {
    display: flex;
    align-items: center;
    justify-content: flex-end;
    gap: 5px;
    margin: 14px 0 2px;
}

.mask input[type="checkbox"] {
    appearance: none;
    width: 14px;
    height: 14px;
    background-color: #444;
    border-radius: 2px;
}

.mask input[type="text"] {
    width: 209px;
    color: #858585;
}

.count {
    margin-top: auto;
}

/* status bar */
.status {
    display: flex;
    align-items: center;
    gap: 6px;
    height: 24px;
    padding: 0 5px;
    white-space: nowrap;
    background-color: #404040;
}

.pos {
    width: 86px;
}

.grid {
    width: 76px;
}

.snap {
    width: 309px;
}

.drc {
    width: 477px;
}

.info {
    margin-right: 14px;
}

.status button {
    height: 19px;
    margin-left: auto;
    padding: 0 4px;
    background-color: #4c4c4c;
    border: 1px solid #2b2b2b;
    border-radius: 3px;
}
```
